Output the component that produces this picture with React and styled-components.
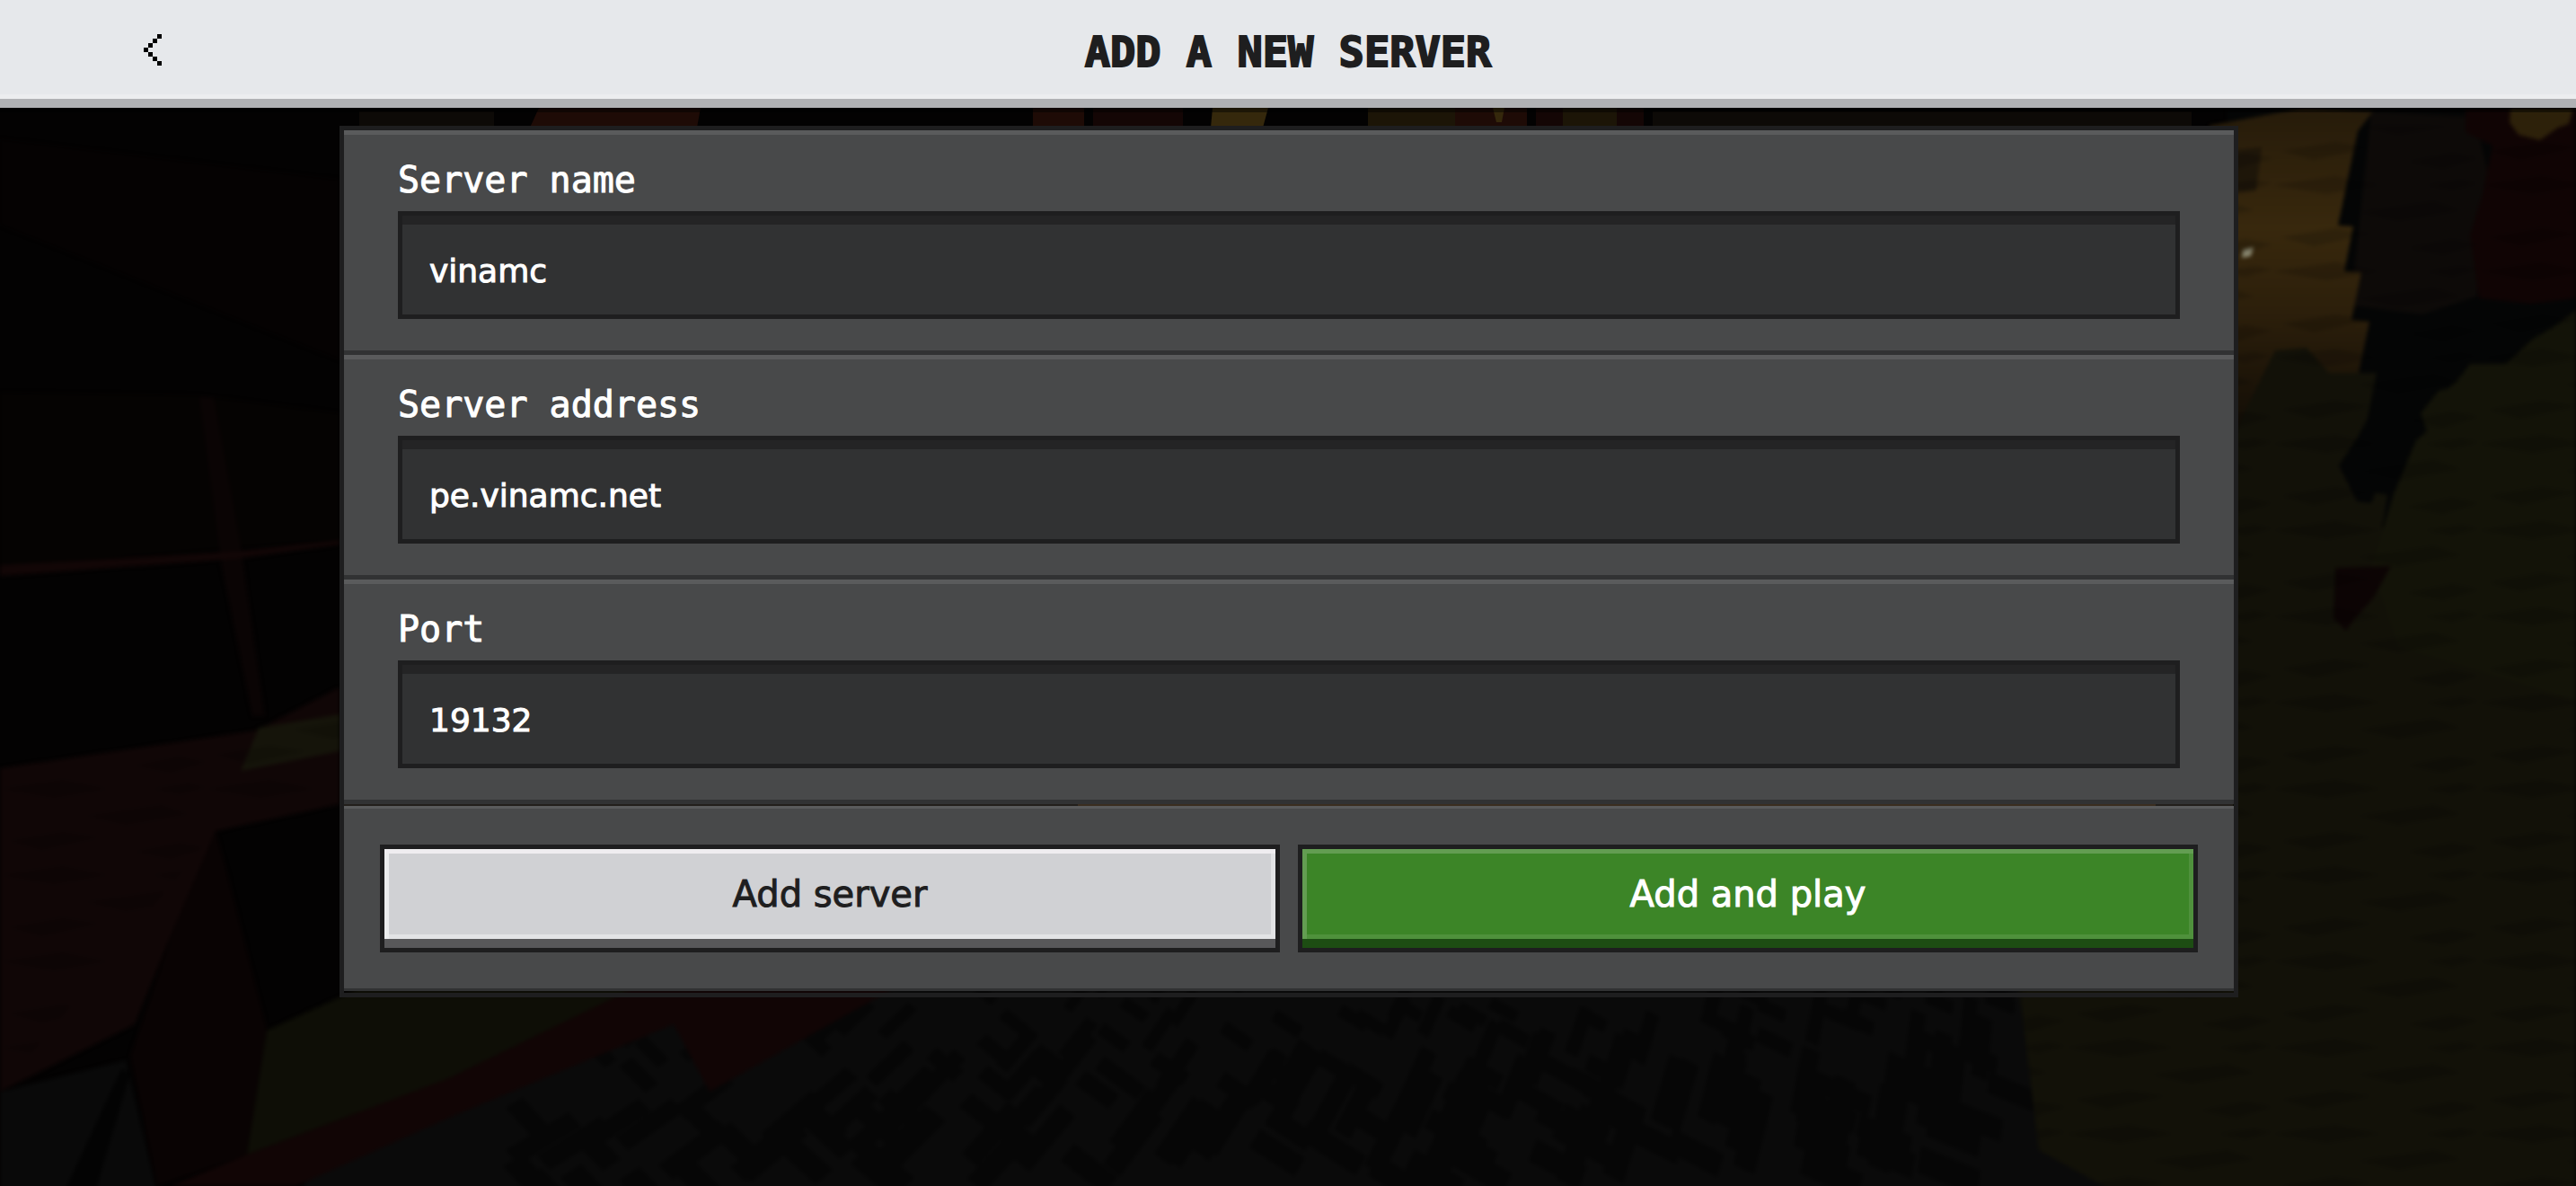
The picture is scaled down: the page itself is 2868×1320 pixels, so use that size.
import React, { useState } from 'react';
import styled, { createGlobalStyle } from 'styled-components';

const GlobalStyle = createGlobalStyle`
  *, *::before, *::after {
    box-sizing: border-box;
  }

  body {
    margin: 0;
    background: #030202;
    font-family: 'DejaVu Sans', Verdana, sans-serif;
  }
`;

const Screen = styled.div`
  position: relative;
  display: flex;
  flex-direction: column;
  min-height: 100vh;
`;

const StyledScenery = styled.svg`
  position: absolute;
  inset: 0;
  z-index: -1;
  width: 100%;
  height: 100%;
`;

const Header = styled.header`
  display: grid;
  grid-template-columns: 1fr auto 1fr;
  align-items: center;
  height: 120px;
  border-bottom: 10px solid #b0b1b4;
  background: #e6e8eb;
  box-shadow: inset 0 -5px 0 #ecedef;
`;

const BackButton = styled.button`
  display: flex;
  justify-self: start;
  margin-left: 140px;
  padding: 20px;
  border: 0;
  background: none;
  cursor: pointer;
`;

const Title = styled.h1`
  margin: 0;
  padding-top: 6px;
  color: #1e1e1f;
  font-family: 'DejaVu Sans Mono', monospace;
  font-size: 47px;
  font-weight: 700;
  line-height: 48px;
  text-transform: uppercase;
  -webkit-text-stroke: 2px #1e1e1f;
`;

const Main = styled.main`
  padding: 20px 376px 20px 378px;
`;

const Panel = styled.form`
  display: flex;
  flex-direction: column;
  border: 5px solid #1e1e1f;
`;

const FieldSection = styled.div`
  display: flex;
  flex-direction: column;
  gap: 15px;
  padding: 30px 60px 35px;
  border-top: 5px solid #5a5b5c;
  border-bottom: 5px solid #313233;
  background: #48494a;
`;

const FieldLabel = styled.label`
  color: #ffffff;
  font-family: 'DejaVu Sans Mono', monospace;
  font-size: 40px;
  line-height: 40px;
  -webkit-text-stroke: 1px #ffffff;
`;

const TextField = styled.input`
  width: 100%;
  height: 120px;
  padding: 12px 30px 0;
  border: 5px solid #1e1e1f;
  border-radius: 0;
  outline: 0;
  background: #313233;
  box-shadow: inset 0 10px 0 #242425;
  color: #ffffff;
  font-family: inherit;
  font-size: 36px;
  -webkit-text-stroke: 1px #ffffff;
`;

const Actions = styled.div`
  display: flex;
  gap: 20px;
  margin: 2px 0;
  padding: 40px;
  border-top: 3px solid #5a5b5c;
  border-bottom: 3px solid #313233;
  background: #48494a;
`;

const tones = {
  light: {
    face: '#d0d1d4',
    text: '#1e1e1f',
    top: '#efedf0',
    side: '#ecedee',
    low: '#e2e3e5',
    base: '#58585a'
  },
  green: {
    face: '#3c8527',
    text: '#ffffff',
    top: '#639d52',
    side: '#639d52',
    low: '#4f913c',
    base: '#1d4d13'
  }
};

const ActionButton = styled.button`
  flex: 1;
  height: 120px;
  padding: 0 10px 10px;
  border: 5px solid #1e1e1f;
  border-radius: 0;
  background: ${({ $tone }) => tones[$tone].face};
  box-shadow:
    inset 0 -10px 0 ${({ $tone }) => tones[$tone].base},
    inset 0 5px 0 ${({ $tone }) => tones[$tone].top},
    inset 5px 0 0 ${({ $tone }) => tones[$tone].side},
    inset -5px -15px 0 ${({ $tone }) => tones[$tone].low};
  color: ${({ $tone }) => tones[$tone].text};
  font-family: inherit;
  font-size: 40px;
  -webkit-text-stroke: 1px ${({ $tone }) => tones[$tone].text};
  cursor: pointer;
`;

function BackIcon() {
  return (
    <svg width="20" height="35" viewBox="0 0 4 7" shapeRendering="crispEdges" aria-hidden="true">
      <path d="M3 0h1v1H3zM2 1h1v1H2zM1 2h1v1H1zM0 3h1v1H0zM1 4h1v1H1zM2 5h1v1H2zM3 6h1v1H3z" fill="#000" />
    </svg>
  );
}

// Gaps between the cobbles; they lean left to right and get steeper towards the right edge
function cobbleGaps() {
  let seed = 7;
  const random = () => {
    seed = (seed * 16807) % 2147483647;
    return seed / 2147483647;
  };
  let d = '';
  for (let i = 0; i < 230; i += 1) {
    const x = Math.round(560 + random() * 1660);
    const y = Math.round(1100 + random() * 215);
    const t = (x - 560) / 1660;
    const size = 0.6 + (y - 1100) / 260;
    const rise = [Math.round((34 - 30 * t) * size), Math.round(-(20 + 24 * t) * size)];
    const fall = [Math.round((18 + 12 * t) * size), Math.round((20 - 8 * t) * size)];
    const k = random() > 0.5 ? [1.6, 0.6] : [0.5, 1.6];
    const a = rise.map(v => Math.round(v * k[0]));
    const b = fall.map(v => Math.round(v * k[1]));
    d += `M${x} ${y}l${a[0]} ${a[1]} ${b[0]} ${b[1]} ${-a[0]} ${-a[1]}z`;
  }
  return d;
}

const gaps = cobbleGaps();

// The dimmed nether forest behind the form
function Scenery() {
  return (
    <StyledScenery viewBox="0 0 2868 1320" preserveAspectRatio="xMidYMid slice" aria-hidden="true">
      <defs>
        <linearGradient id="gold" x1="0" y1="0" x2="0" y2="1">
          <stop offset="0" stopColor="#261b0a" />
          <stop offset="0.35" stopColor="#38280d" />
          <stop offset="0.6" stopColor="#2c1f0b" />
          <stop offset="1" stopColor="#0e0a05" />
        </linearGradient>
        <pattern id="grain" width="230" height="96" patternUnits="userSpaceOnUse">
          <path d="M0 14 70 4l50 10-60 10zM96 44l84-12 30 10-70 12zM10 72l60-10 40 6-64 14zM150 84l50-10 30 6-40 12zM170 14l40-6 20 4-30 8z" fill="#000" opacity="0.16" />
        </pattern>
        <filter id="soft" x="0" y="0" width="1" height="1" colorInterpolationFilters="sRGB">
          <feGaussianBlur stdDeviation="2" />
        </filter>
      </defs>
      <path d="M0 120h2868v1200H0z" fill="#030202" />

      <g filter="url(#soft)">
        {/* netherrack wall and floor on the left */}
        <path d="M0 155 378 200V400L0 250z" fill="#050202" />
        <path d="M0 437 220 440 378 460V600L0 630z" fill="#050302" />
        <path d="M222 442h16l30 165 27 190h-14l-34-165z" fill="#0a0404" />
        <path d="M0 629 260 614 378 601v5L262 622 0 641z" fill="#120606" />
        <path d="M0 855 285 813 378 765v130l-138 30-45 105-45 110L0 1215z" fill="#100606" />
        <path d="m288 810 90-15v41l-110 22z" fill="#15140a" />
        <path d="m240 925-45 105-50 145 30 145 100-35 22-140-47-185z" fill="#090303" />
        <path d="m0 1215 140-35 38 160H0z" fill="#090909" />
        <path d="m70 1330 65-140 10 4-40 136z" fill="#030303" />

        {/* cobbled path along the bottom */}
        <path d="M500 1100h1760l22 180 110 50H330z" fill="#0a0a0a" />
        <path d={gaps} fill="#050505" opacity="0.8" />
        <path d="m297 1147 103-47h305l-205 100-225 85z" fill="#0e0e06" />
        <path d="M705 1100h290l-205 115-40-75-250 104-170 76H190l85-35 225-85z" fill="#110505" />
        <path d="M0 855 285 813 378 765v130l-138 30-240 290z" fill="url(#grain)" />

        {/* trunk, vines and foliage on the right */}
        <path d="M2480 120h388v460h-388z" fill="#040505" />
        <path d="m2640 124 115 6 22 90-20 110-60 20-80-10z" fill="#0d0a08" />
        <path d="M2745 120h123v212l-50 6-58-6-10-70 15-50 10-50-30-15z" fill="#100404" />
        <path d="m2795 120h70l-5 18-12 4-20 14-24-6-10-14z" fill="#2d210a" />
        <path d="m2460 140 105-20 77 4-17 22-22 105 17 1-10 50 19 1-11 53 20 2-12 57-134 85z" fill="url(#gold)" />
        <path d="m2480 168 38-4-6 48-32 4z" fill="#1e1609" />
        <path d="m2497 278 12-3-3 10-10 2z" fill="#8a8870" />
        <path d="m2480 500 28-60 25-50 35-3 25 28h53l-12 60-24 40 20 30 28 6-6 39 20-40 10-30 28-40-7-20 25-30 30-25h40l30-30L2868 345V1330H2360L2270 1280 2248 1100H2480z" fill="#121108" />
        <path d="m2868 350-48 27-30 28h-40l-20 26-15 4-20 25 7 20-12 10-25 60-25 80 30 90 198 60z" fill="#131308" />
        <path d="m2650 440 14 60-24 60-16-2-20-40 20-30z" fill="#040505" />
        <path d="m2600 632 62-2-20 36-20 22-10 14-14-14z" fill="#0c0404" />
        <path d="M2480 140H2868V1330H2360L2270 1280 2248 1100H2480z" fill="url(#grain)" />
      </g>

      {/* strip above the form */}
      <path d="M600 120h180l-4 22H590zM1150 120h57v22h-57zM1620 120h80v22h-80z" fill="#1e0b06" />
      <path d="M1217 120h100v22h-100zM1710 120h120v22h-120z" fill="#140605" />
      <path d="M1350 120h62l-6 22h-58zM1662 120h13l-3 16h-6z" fill="#35280c" />
      <path d="M1523 120h97v22h-97zM1740 120h60v22h-60z" fill="#1c1507" />
      <path d="M400 124h150v16H400zM1840 124h600v16h-600z" fill="#0d0a07" />
      <path d="M0 120h2868v5H0z" fill="#000" opacity="0.45" />

      {/* seam between the fields and the buttons */}
      <path d="M382 890h2104v12H382z" fill="#221f1b" />
      <path d="M1200 890h1200v12H1200z" fill="#3a2e20" />
    </StyledScenery>
  );
}

function Field({ id, label, value, onChange, inputMode }) {
  return (
    <FieldSection>
      <FieldLabel htmlFor={id}>{label}</FieldLabel>
      <TextField
        id={id}
        type="text"
        inputMode={inputMode}
        autoComplete="off"
        spellCheck={false}
        value={value}
        onChange={event => onChange(event.target.value)}
      />
    </FieldSection>
  );
}

export default function App() {
  const [name, setName] = useState('vinamc');
  const [address, setAddress] = useState('pe.vinamc.net');
  const [port, setPort] = useState('19132');

  return (
    <Screen>
      <GlobalStyle />
      <Scenery />
      <Header>
        <BackButton type="button" aria-label="Back">
          <BackIcon />
        </BackButton>
        <Title>Add a new server</Title>
      </Header>
      <Main>
        <Panel onSubmit={event => event.preventDefault()}>
          <Field id="server-name" label="Server name" value={name} onChange={setName} />
          <Field id="server-address" label="Server address" value={address} onChange={setAddress} />
          <Field id="server-port" label="Port" value={port} onChange={setPort} inputMode="numeric" />
          <Actions>
            <ActionButton type="button" $tone="light">Add server</ActionButton>
            <ActionButton type="submit" $tone="green">Add and play</ActionButton>
          </Actions>
        </Panel>
      </Main>
    </Screen>
  );
}
